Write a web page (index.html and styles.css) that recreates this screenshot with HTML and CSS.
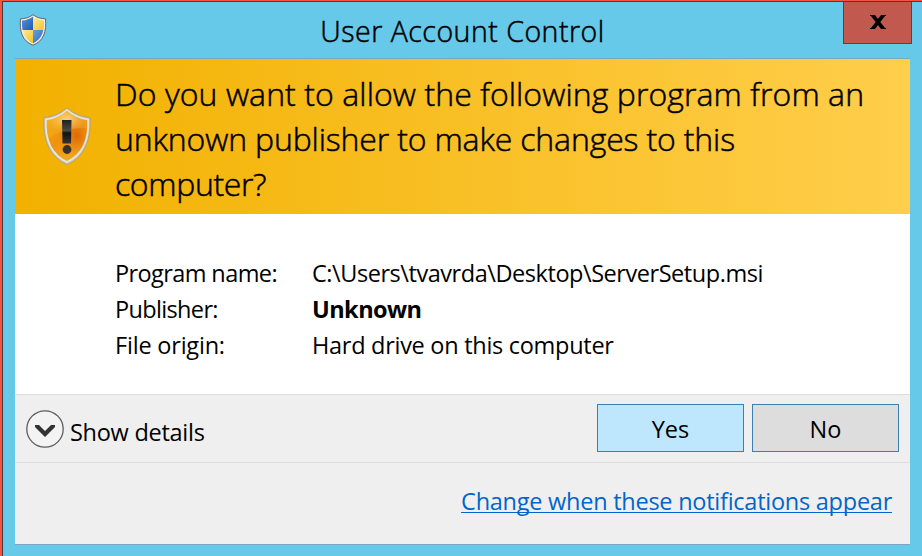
FILE: index.html
```html
<!DOCTYPE html>
<html lang="en">
<head>
<meta charset="utf-8">
<title>User Account Control</title>
<link rel="stylesheet" href="styles.css">
</head>
<body>
<div class="window">
  <header class="titlebar">
    <svg class="app-icon" viewBox="0 0 28 32" aria-hidden="true">
      <defs>
        <clipPath id="shield"><path d="M14 2.5C11 5 7 6.300 3 6.500C2.500 16 4.500 25 14 29.500C23.500 25 25.500 16 25 6.500C21 6.300 17 5 14 2.500Z"/></clipPath>
        <linearGradient id="blue" x1="0" y1="0" x2="1" y2="1"><stop offset="0" stop-color="#6c9edb"/><stop offset="1" stop-color="#195cbd"/></linearGradient>
        <linearGradient id="yellow" x1="0" y1="0" x2="1" y2="1"><stop offset="0" stop-color="#fff3a0"/><stop offset="1" stop-color="#efbd20"/></linearGradient>
      </defs>
      <path d="M14 .7C10.500 3.600 6 4.700 1.500 4.800C.4 17 3 27 14 31.200C25 27 27.600 17 26.500 4.800C22 4.700 17.500 3.600 14 .7Z" fill="#f0efeb" stroke="#5f6668" stroke-width="1"/>
      <g clip-path="url(#shield)">
        <path d="M0 0H14V16H0Z" fill="url(#blue)"/><path d="M14 0H28V16H14Z" fill="url(#yellow)"/>
        <path d="M0 16H14V32H0Z" fill="url(#yellow)"/><path d="M14 16H28V32H14Z" fill="url(#blue)"/>
      </g>
    </svg>
    <h1 class="title"><span>User Account Control</span></h1>
    <button class="close" aria-label="Close">
      <svg viewBox="0 0 16 14" aria-hidden="true"><path d="M0 0H5L8 4L11 0H16V1H15L10.300 7L15 13H16V14H11L8 10L5 14H0V13H1L5.700 7L1 1H0Z"/></svg>
    </button>
  </header>
  <main class="content">
    <section class="banner">
      <svg class="warning" viewBox="0 0 48 58" aria-hidden="true">
        <defs>
          <linearGradient id="amber" x1="0" y1="0" x2=".8" y2="1"><stop offset="0" stop-color="#f3ae08"/><stop offset=".5" stop-color="#ef920e"/><stop offset="1" stop-color="#f4b52c"/></linearGradient>
          <radialGradient id="ember" cx=".75" cy=".5" r=".5"><stop offset="0" stop-color="#df6704"/><stop offset="1" stop-color="#e88409" stop-opacity="0"/></radialGradient>
          <radialGradient id="gloss" cx=".5" cy=".3" r=".5"><stop offset="0" stop-color="#fff3c8"/><stop offset="1" stop-color="#f8c548" stop-opacity=".3"/></radialGradient>
          <linearGradient id="mark" x1="0" y1="0" x2="0" y2="1"><stop offset="0" stop-color="#222"/><stop offset=".45" stop-color="#4c4843"/><stop offset=".55" stop-color="#111"/><stop offset="1" stop-color="#333"/></linearGradient>
        </defs>
        <path d="M24 1C17 7 9 10 1 10.500C0 31 5 49 24 57.500C43 49 48 31 47 10.500C39 10 31 7 24 1Z" fill="#cfcbbf" stroke="#a59c80" stroke-width=".8"/>
        <path d="M24 3C17 9 10 11.800 3 12.500C2 31 7 47 24 55C41 47 46 31 45 12.500C38 11.800 31 9 24 3Z" fill="url(#amber)" stroke="#e8e6df" stroke-width="1.600"/>
        <path d="M24 4C17 10 10 12.500 4 13C3 31 8 46 24 53.500C40 46 45 31 44 13C38 12.500 31 10 24 4Z" fill="url(#ember)"/>
        <path d="M24 4C17 10 10 12.500 4 13Q3.500 23 6 31C14 26 25 20 44 21V13C38 12.500 31 10 24 4Z" fill="url(#gloss)" opacity=".65"/>
        <path d="M19 13H28.500L28 36.500H19.500Z" fill="url(#mark)"/><circle cx="24" cy="42.500" r="4.400" fill="#38322b"/>
      </svg>
      <h2 class="question">
        <span class="q1">Do you want to allow the following program from an</span><br>
        <span class="q2">unknown publisher to make changes to this</span><br>
        <span class="q3">computer?</span>
      </h2>
    </section>
    <dl class="facts">
      <dt class="name-label">Program name:</dt><dd class="path">C:\Users\tvavrda\Desktop\ServerSetup.msi</dd>
      <dt class="publisher-label">Publisher:</dt><dd class="publisher">Unknown</dd>
      <dt class="origin-label">File origin:</dt><dd class="origin">Hard drive on this computer</dd>
    </dl>
    <section class="actions">
      <button class="details">
        <svg viewBox="0 0 38 38" aria-hidden="true"><circle cx="19" cy="19" r="18.200" fill="#f3f3f3" stroke="#5c5c5c" stroke-width="1.300"/><path d="M9 15H13L19 21L25 15H29V17L19 27L9 17Z" fill="#333"/></svg>
        <span>Show details</span>
      </button>
      <button class="btn yes">Yes</button>
      <button class="btn">No</button>
    </section>
    <footer class="footer"><a class="link" href="#">Change when these notifications appear</a></footer>
  </main>
</div>
</body>
</html>
```
FILE: styles.css
```css
* { box-sizing: border-box; }
body {
  margin: 0;
  overflow: hidden;
  font: 23.5px/36px "Open Sans", "Noto Sans", sans-serif;
  color: #000;
}
button { font: inherit; color: inherit; padding: 0; border-radius: 0; }
h1, h2, dl, dd { margin: 0; }
h1, h2 { font-weight: 300; -webkit-text-stroke: .5px #000; }
.window {
  height: 556px;
  background: #66c9e9;
  border-left: 2px solid #f55443;
  border-top: 1px solid #f55443;
  box-shadow: inset 1px 1px #403c40;
  padding: 1px 12px 0 13px;
}
.titlebar { display: flex; height: 56px; align-items: flex-start; }
.app-icon { width: 28px; height: 32px; margin: 12px 0 0 4px; }
.title { flex: 1; text-align: center; font-size: 28.5px; letter-spacing: .5px; line-height: 40px; margin-top: 9px; padding-left: 35px; white-space: nowrap; }
.close {
  display: flex; align-items: center; justify-content: center;
  width: 69px; height: 42px; margin-right: -2px;
  background: #c1594f; border: 1px solid #643f42; border-top: 0;
}
.close svg { width: 16px; height: 14px; margin-top: -1px; }
.content {
  height: 487px;
  border-top: 1px solid #75a9c2;
  border-bottom: 1px solid #78a9bf;
  background: #efefef;
}
.banner { display: flex; height: 155px; background: linear-gradient(90deg, #f2b100, #ffce4b); }
.warning { width: 48px; height: 58px; margin: 48px 25px 0 28px; flex: none; }
.question { font-size: 32px; line-height: 45px; margin-top: 12px; margin-left: -1px; white-space: nowrap; }
.q1 { letter-spacing: .08px; }
.q2 { letter-spacing: -.15px; }
.q3 { letter-spacing: -.35px; }
.facts {
  display: grid; grid-template-columns: 197px 1fr; grid-auto-rows: 36px;
  height: 181px; padding: 41px 0 0 100px;
  background: #fff; border-bottom: 1px solid #dedede; white-space: nowrap;
}
.name-label { letter-spacing: -.6px; }
.publisher-label { letter-spacing: -.65px; }
.origin-label { letter-spacing: -.2px; }
.path { letter-spacing: -.45px; }
.publisher { font-weight: 700; letter-spacing: -.55px; }
.origin { letter-spacing: -.28px; }
.actions { display: flex; gap: 8px; height: 68px; padding: 9px 11px 0 11px; border-bottom: 1px solid #dedede; }
.details { display: flex; gap: 6px; margin-right: auto; height: 50px; border: 0; background: none; align-items: flex-start; white-space: nowrap; }
.details svg { width: 38px; height: 38px; margin-top: 6px; }
.details span { margin-top: 10px; letter-spacing: -.27px; }
.btn { width: 147px; height: 48px; background: #ddd; border: 1px solid #3c7fb1; padding-top: 1px; }
.yes { background: #bee6fd; }
.footer { text-align: right; padding: 20px 18px 0 0; }
.link { color: #0066cc; letter-spacing: -.25px; text-decoration: underline; text-decoration-thickness: 1px; text-underline-offset: 2px; text-decoration-skip-ink: none; white-space: nowrap; }
```
